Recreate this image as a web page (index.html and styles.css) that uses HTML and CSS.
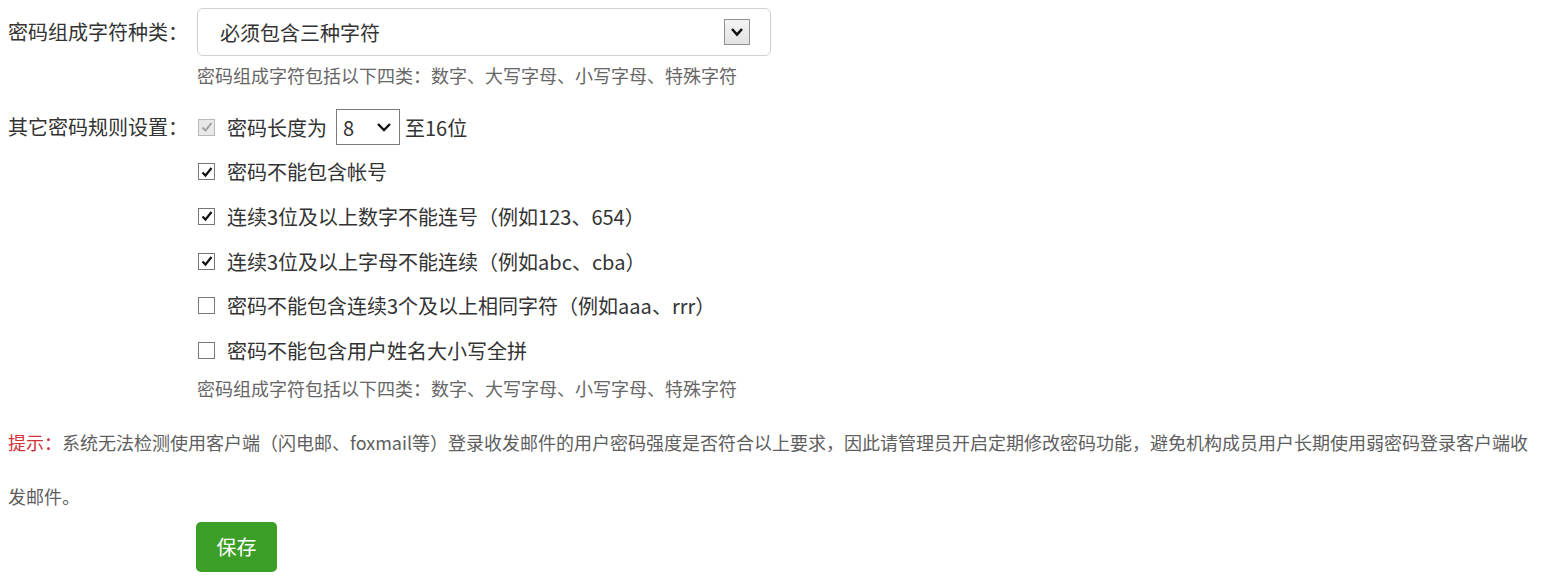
FILE: index.html
```html
<!DOCTYPE html>
<html lang="zh-CN">
<head>
<meta charset="utf-8">
<title>密码规则设置</title>
<link rel="stylesheet" href="styles.css">
</head>
<body>
<div class="page">
  <div class="form-row">
    <div class="label">密码组成字符种类：</div>
    <div class="content">
      <div class="select-big">
        <span class="select-text">必须包含三种字符</span>
        <span class="select-btn">
          <svg width="14" height="10" viewBox="0 0 14 10"><polyline points="2,2 7,7.5 12,2" fill="none" stroke="#111" stroke-width="2.6" stroke-linejoin="miter"/></svg>
        </span>
      </div>
      <div class="hint hint-first">密码组成字符包括以下四类：数字、大写字母、小写字母、特殊字符</div>
    </div>
  </div>

  <div class="form-row rules-row">
    <div class="label rule-label">其它密码规则设置：</div>
    <div class="content">
      <div class="rules">
        <div class="rule">
          <span class="cb cb-disabled"><svg width="14" height="14" viewBox="0 0 14 14"><polyline points="2.5,7.5 5.5,10.5 11.5,3" fill="none" stroke="#a0a0a0" stroke-width="2"/></svg></span>
          <span class="rule-text">密码长度为</span>
          <span class="select-small">
            <span class="ss-val">8</span>
            <svg width="16" height="10" viewBox="0 0 16 10"><polyline points="2,2 8,8 14,2" fill="none" stroke="#111" stroke-width="2.4"/></svg>
          </span>
          <span class="rule-text after">至16位</span>
        </div>
        <div class="rule">
          <span class="cb"><svg width="14" height="14" viewBox="0 0 14 14"><polyline points="2.5,7.5 5.5,10.5 11.5,3" fill="none" stroke="#111" stroke-width="2.2"/></svg></span>
          <span class="rule-text">密码不能包含帐号</span>
        </div>
        <div class="rule">
          <span class="cb"><svg width="14" height="14" viewBox="0 0 14 14"><polyline points="2.5,7.5 5.5,10.5 11.5,3" fill="none" stroke="#111" stroke-width="2.2"/></svg></span>
          <span class="rule-text">连续3位及以上数字不能连号（例如123、654）</span>
        </div>
        <div class="rule">
          <span class="cb"><svg width="14" height="14" viewBox="0 0 14 14"><polyline points="2.5,7.5 5.5,10.5 11.5,3" fill="none" stroke="#111" stroke-width="2.2"/></svg></span>
          <span class="rule-text">连续3位及以上字母不能连续（例如abc、cba）</span>
        </div>
        <div class="rule">
          <span class="cb"></span>
          <span class="rule-text">密码不能包含连续3个及以上相同字符（例如aaa、rrr）</span>
        </div>
        <div class="rule">
          <span class="cb"></span>
          <span class="rule-text">密码不能包含用户姓名大小写全拼</span>
        </div>
      </div>
      <div class="hint hint-second">密码组成字符包括以下四类：数字、大写字母、小写字母、特殊字符</div>
    </div>
  </div>

  <p class="tip"><span class="tip-head">提示：</span>系统无法检测使用客户端（闪电邮、foxmail等）登录收发邮件的用户密码强度是否符合以上要求，因此请管理员开启定期修改密码功能，避免机构成员用户长期使用弱密码登录客户端收发邮件。</p>

  <div class="actions">
    <button class="btn-save" type="button">保存</button>
  </div>
</div>
</body>
</html>
```

FILE: styles.css
```css
* { box-sizing: border-box; }

html, body {
  margin: 0;
  padding: 0;
  background: #fff;
}

body {
  font-family: "Noto Sans CJK SC", "Microsoft YaHei", "Noto Sans", sans-serif;
  color: #333;
}

.page {
  padding: 8px 0 0 8px;
  width: 1542px;
}

.form-row {
  display: flex;
  align-items: flex-start;
}

.label {
  width: 189px;
  flex: none;
  font-size: 20px;
  line-height: 48px;
  white-space: nowrap;
  color: #333;
}

.rule-label {
  line-height: 44.6px;
}

.content {
  display: flex;
  flex-direction: column;
}

.select-big {
  width: 574px;
  height: 48px;
  border: 1px solid #d0d0d0;
  border-radius: 6px;
  display: flex;
  align-items: center;
  justify-content: space-between;
  padding: 0 20px 0 22px;
  background: #fff;
}

.select-text {
  font-size: 20px;
  color: #333;
}

.select-btn {
  width: 26px;
  height: 26px;
  border: 1px solid #8f8f8f;
  background: linear-gradient(#f4f4f4, #e2e2e2);
  display: flex;
  align-items: center;
  justify-content: center;
}

.hint {
  font-size: 18px;
  line-height: 24px;
  color: #666;
  white-space: nowrap;
}

.hint-first {
  margin-top: 7px;
}

.rules-row {
  margin-top: 18px;
}

.rules {
  display: flex;
  flex-direction: column;
}

.rule {
  height: 44.6px;
  display: flex;
  align-items: center;
}

.cb {
  width: 17px;
  height: 17px;
  border: 1.5px solid #777;
  background: #fff;
  display: flex;
  align-items: center;
  justify-content: center;
  flex: none;
  margin-left: 1px;
}

.cb-disabled {
  border-color: #b8b8b8;
  background: #e8e8e8;
}

.rule-text {
  font-size: 20px;
  color: #333;
  margin-left: 12px;
  white-space: nowrap;
}

.rule-text.after {
  margin-left: 5px;
}

.select-small {
  width: 64px;
  height: 36px;
  border: 1px solid #7a7a7a;
  display: flex;
  align-items: center;
  justify-content: space-between;
  padding: 0 7px 0 6px;
  margin-left: 9px;
  font-size: 20px;
  color: #333;
}

.hint-second {
  margin-top: 3px;
}

.tip {
  margin: 15px 0 0 0;
  font-size: 18px;
  line-height: 54px;
  color: #5e5e5e;
  width: 1530px;
}

.tip-head {
  color: #d0323a;
}

.actions {
  padding-left: 188px;
  margin-top: -1px;
}

.btn-save {
  width: 81px;
  height: 50px;
  border: none;
  border-radius: 5px;
  background: #3b9e26;
  color: #fff;
  font-family: "Noto Sans CJK SC", "Microsoft YaHei", sans-serif;
  font-size: 20px;
  padding: 0;
  cursor: pointer;
}
```
